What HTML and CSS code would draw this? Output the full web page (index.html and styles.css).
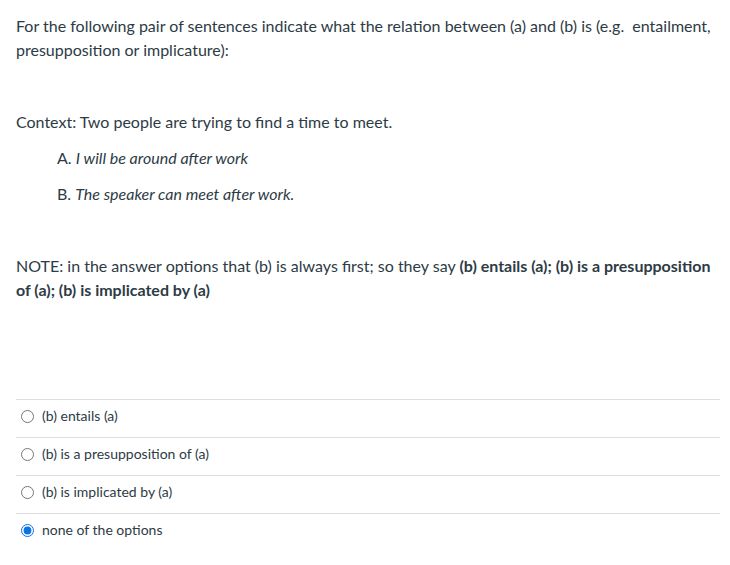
FILE: index.html
```html
<!DOCTYPE html>
<html>
<head>
<meta charset="utf-8">
<link rel="stylesheet" href="styles.css">
</head>
<body>
<div class="question">
  <div class="question-text">
    <p>For the following pair of sentences indicate what the relation between (a) and (b) is (e.g.&nbsp; entailment, presupposition or implicature):</p>
    <p>&nbsp;</p>
    <p>Context: Two people are trying to find a time to meet.</p>
    <p class="indent">A. <em>I will be around after work</em></p>
    <p class="indent">B. <em>The speaker can meet after work.</em></p>
    <p>&nbsp;</p>
    <p>NOTE: in the answer options that (b) is always first; so they say <strong>(b) entails (a); (b) is a presupposition of (a); (b) is implicated by (a)</strong></p>
  </div>
  <div class="answers">
    <label class="answer"><input type="radio" name="q1"><span>(b) entails (a)</span></label>
    <label class="answer"><input type="radio" name="q1"><span>(b) is a presupposition of (a)</span></label>
    <label class="answer"><input type="radio" name="q1"><span>(b) is implicated by (a)</span></label>
    <label class="answer"><input type="radio" name="q1" checked><span>none of the options</span></label>
  </div>
</div>
</body>
</html>
```

FILE: styles.css
```css
html, body {
  margin: 0;
  padding: 0;
  background: #ffffff;
}
body {
  font-family: Lato, "Helvetica Neue", Arial, sans-serif;
  color: #2d3b45;
  font-size: 16px;
  line-height: 24px;
}
.question {
  padding: 2px 10px 0 16px;
}
.question-text p {
  margin: 12px 0;
}
.question-text .indent {
  padding-left: 41px;
}
.question-text strong {
  font-weight: 700;
}
.answers {
  margin-top: 97px;
}
.answer {
  display: flex;
  align-items: center;
  box-sizing: border-box;
  height: 38px;
  padding-bottom: 5px;
  border-top: 1px solid #dcdddf;
  font-size: 14px;
  line-height: 20px;
}
.answer input {
  margin: 0 3px 0 5px;
  width: 13px;
  height: 13px;
  accent-color: #0b74e4;
}
.answer span {
  padding-left: 5px;
}
```
